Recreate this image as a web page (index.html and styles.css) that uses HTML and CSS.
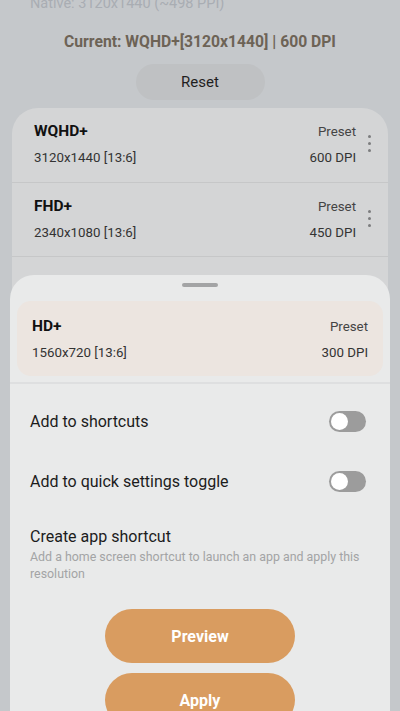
FILE: index.html
```html
<!DOCTYPE html>
<html lang="en">

<head>
    <meta charset="UTF-8">
    <meta name="viewport" content="width=device-width, initial-scale=1.0">
    <title>Resolution</title>
    <link rel="stylesheet" href="styles.css">
</head>

<body>
    <div class="screen">
        <p class="native">Native: 3120x1440 (~498 PPI)</p>
        <p class="current">Current: WQHD+[3120x1440] | 600 DPI</p>
        <div class="reset-wrap">
            <button class="reset-btn">Reset</button>
        </div>

        <div class="card">
            <div class="res-row">
                <div class="res-info">
                    <div class="line">
                        <span class="res-name">WQHD+</span>
                        <span class="res-tag">Preset</span>
                    </div>
                    <div class="line sub">
                        <span>3120x1440 [13:6]</span>
                        <span>600 DPI</span>
                    </div>
                </div>
                <div class="dots"><i></i><i></i><i></i></div>
            </div>
            <div class="res-row">
                <div class="res-info">
                    <div class="line">
                        <span class="res-name">FHD+</span>
                        <span class="res-tag">Preset</span>
                    </div>
                    <div class="line sub">
                        <span>2340x1080 [13:6]</span>
                        <span>450 DPI</span>
                    </div>
                </div>
                <div class="dots"><i></i><i></i><i></i></div>
            </div>
        </div>

        <!-- bottom sheet over the list -->
        <div class="sheet">
            <div class="handle"></div>
            <div class="picked">
                <div class="line">
                    <span class="res-name">HD+</span>
                    <span class="res-tag">Preset</span>
                </div>
                <div class="line sub">
                    <span>1560x720 [13:6]</span>
                    <span>300 DPI</span>
                </div>
            </div>
            <div class="sheet-divider"></div>

            <div class="option">
                <span>Add to shortcuts</span>
                <span class="toggle"></span>
            </div>
            <div class="option">
                <span>Add to quick settings toggle</span>
                <span class="toggle"></span>
            </div>
            <div class="shortcut">
                <div class="shortcut-title">Create app shortcut</div>
                <div class="shortcut-desc">Add a home screen shortcut to launch an app and apply this resolution</div>
            </div>

            <div class="actions">
                <button class="action-btn">Preview</button>
                <button class="action-btn">Apply</button>
            </div>
        </div>
    </div>
</body>

</html>
```

FILE: styles.css
```css
body {
    font-family: Roboto, "Liberation Sans", sans-serif;
    background-color: #c5c8cb;
    margin: 0;
    height: 711px;
    overflow: hidden;
}

.screen {
    position: relative;
    height: 711px;
    overflow: hidden;
}

.native {
    margin: -5px 0 0 0;
    padding-left: 30px;
    font-size: 14.5px;
    line-height: 18px;
    color: #a9adb3;
}

.current {
    margin: 19px 0 0 0;
    text-align: center;
    font-size: 15.7px;
    line-height: 20px;
    font-weight: bold;
    color: #6d6356;
}

.reset-wrap {
    display: flex;
    justify-content: center;
    margin-top: 12px;
}

.reset-btn {
    width: 129px;
    height: 36px;
    border: none;
    border-radius: 18px;
    background-color: #bfc1c3;
    font-family: inherit;
    font-size: 15px;
    color: #1f1f1f;
}

.card {
    margin: 8px 12px 0 12px;
    background-color: #d4d5d6;
    border-radius: 26px;
    height: 300px;
}

.res-row {
    display: flex;
    align-items: flex-start;
    height: 75px;
    padding: 12px 17px 0 22px;
    border-bottom: 1px solid #c6c7c8;
    box-sizing: border-box;
}

.res-row + .res-row {
    height: 74px;
}

.res-info {
    flex: 1;
    padding-right: 12px;
}

.line {
    display: flex;
    justify-content: space-between;
    align-items: center;
    height: 22px;
    font-size: 13.3px;
    color: #2a2a2a;
}

.line.sub {
    margin-top: 5px;
    height: 20px;
    color: #333;
}

.res-name {
    font-size: 15.5px;
    font-weight: bold;
    color: #111;
}

.res-tag {
    color: #444;
}

.dots {
    display: flex;
    flex-direction: column;
    gap: 4px;
    margin-top: 15px;
}

.dots i {
    display: block;
    width: 3px;
    height: 3px;
    border-radius: 50%;
    background-color: #7c7d7e;
}

.sheet {
    position: absolute;
    top: 275px;
    left: 10px;
    right: 10px;
    bottom: -60px;
    background-color: #e9eaea;
    border-radius: 24px 24px 0 0;
    padding-top: 8px;
}

.handle {
    width: 36px;
    height: 4px;
    border-radius: 2px;
    background-color: #a3a4a5;
    margin: 0 auto 14px auto;
}

.picked {
    margin: 0 7px;
    height: 75px;
    box-sizing: border-box;
    padding: 14px 15px 0 15px;
    background-color: #ece5e0;
    border-radius: 14px;
}

.sheet-divider {
    height: 2px;
    background-color: #dedfe0;
    margin-top: 6px;
    margin-bottom: 7px;
}

.option {
    display: flex;
    justify-content: space-between;
    align-items: center;
    height: 60px;
    padding: 0 24px 0 20px;
    font-size: 16px;
    color: #1c1c1c;
}

.toggle {
    width: 37px;
    height: 21px;
    border-radius: 11px;
    background-color: #9c9c9c;
    position: relative;
}

.toggle::after {
    content: "";
    position: absolute;
    left: 2px;
    top: 2px;
    width: 17px;
    height: 17px;
    border-radius: 50%;
    background-color: #ffffff;
}

.shortcut {
    padding: 15px 24px 0 20px;
}

.shortcut-title {
    font-size: 16px;
    line-height: 22px;
    color: #1c1c1c;
}

.shortcut-desc {
    font-size: 12.4px;
    line-height: 17px;
    color: #a3a4a5;
}

.actions {
    display: flex;
    flex-direction: column;
    align-items: center;
    gap: 10px;
    margin-top: 27px;
}

.action-btn {
    width: 190px;
    height: 54px;
    border: none;
    border-radius: 27px;
    background-color: #d99c60;
    color: #ffffff;
    font-family: inherit;
    font-size: 16px;
    font-weight: bold;
}
```
